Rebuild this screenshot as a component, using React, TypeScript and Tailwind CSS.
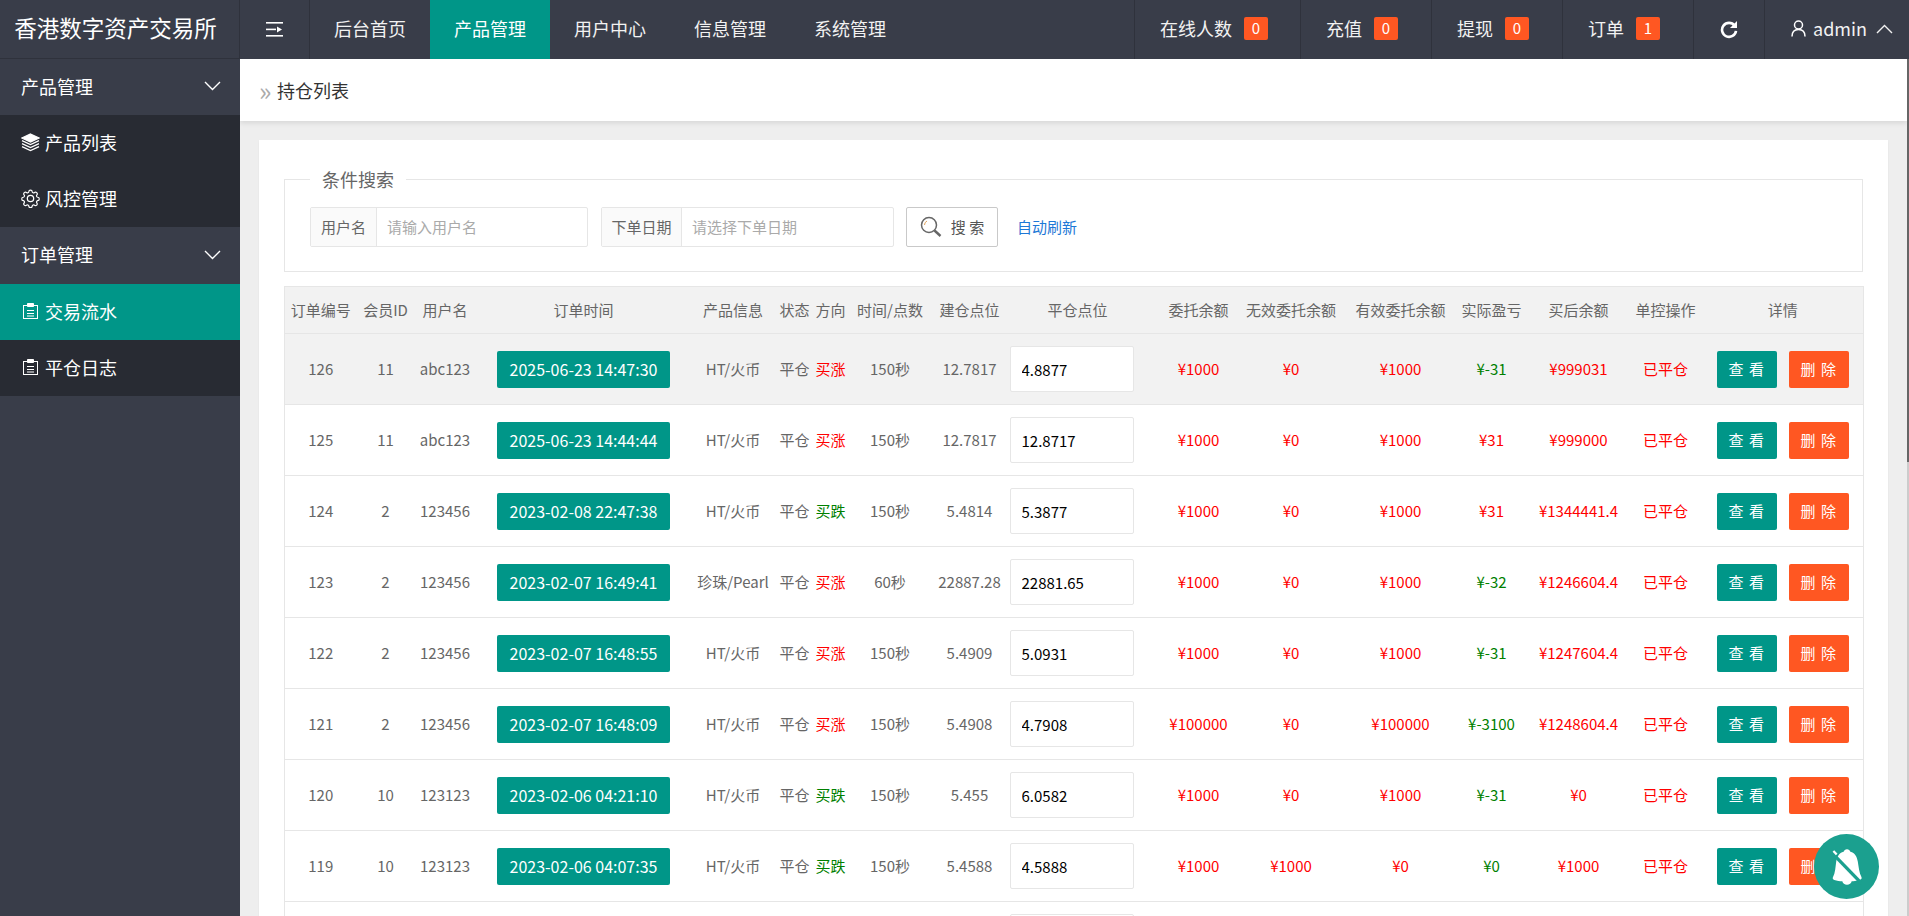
import React from "react";

const font = { fontFamily: '"Noto Sans CJK SC", sans-serif' };

type Row = {
  id: string; uid: string; name: string; time: string; prod: string; dir: "买涨" | "买跌"; dur: string;
  open: string; close: string; a: string; b: string; c: string; pl: string; win: boolean; after: string;
};

const rows: Row[] = [
  { id: "126", uid: "11", name: "abc123", time: "2025-06-23 14:47:30", prod: "HT/火币", dir: "买涨", dur: "150秒", open: "12.7817", close: "4.8877", a: "¥1000", b: "¥0", c: "¥1000", pl: "¥-31", win: false, after: "¥999031" },
  { id: "125", uid: "11", name: "abc123", time: "2025-06-23 14:44:44", prod: "HT/火币", dir: "买涨", dur: "150秒", open: "12.7817", close: "12.8717", a: "¥1000", b: "¥0", c: "¥1000", pl: "¥31", win: true, after: "¥999000" },
  { id: "124", uid: "2", name: "123456", time: "2023-02-08 22:47:38", prod: "HT/火币", dir: "买跌", dur: "150秒", open: "5.4814", close: "5.3877", a: "¥1000", b: "¥0", c: "¥1000", pl: "¥31", win: true, after: "¥1344441.4" },
  { id: "123", uid: "2", name: "123456", time: "2023-02-07 16:49:41", prod: "珍珠/Pearl", dir: "买涨", dur: "60秒", open: "22887.28", close: "22881.65", a: "¥1000", b: "¥0", c: "¥1000", pl: "¥-32", win: false, after: "¥1246604.4" },
  { id: "122", uid: "2", name: "123456", time: "2023-02-07 16:48:55", prod: "HT/火币", dir: "买涨", dur: "150秒", open: "5.4909", close: "5.0931", a: "¥1000", b: "¥0", c: "¥1000", pl: "¥-31", win: false, after: "¥1247604.4" },
  { id: "121", uid: "2", name: "123456", time: "2023-02-07 16:48:09", prod: "HT/火币", dir: "买涨", dur: "150秒", open: "5.4908", close: "4.7908", a: "¥100000", b: "¥0", c: "¥100000", pl: "¥-3100", win: false, after: "¥1248604.4" },
  { id: "120", uid: "10", name: "123123", time: "2023-02-06 04:21:10", prod: "HT/火币", dir: "买跌", dur: "150秒", open: "5.455", close: "6.0582", a: "¥1000", b: "¥0", c: "¥1000", pl: "¥-31", win: false, after: "¥0" },
  { id: "119", uid: "10", name: "123123", time: "2023-02-06 04:07:35", prod: "HT/火币", dir: "买跌", dur: "150秒", open: "5.4588", close: "4.5888", a: "¥1000", b: "¥1000", c: "¥0", pl: "¥0", win: false, after: "¥1000" },
];

const Chevron = ({ up = false }: { up?: boolean }) => (
  <svg width="17" height="10" viewBox="0 0 17 10" fill="none" stroke="currentColor" strokeWidth="1.4">
    <path d={up ? "M1 9L8.5 1.5L16 9" : "M1 1L8.5 8.5L16 1"} />
  </svg>
);

const Layers = () => (
  <svg width="19" height="19" viewBox="0 0 19 19" fill="none" stroke="white" strokeWidth="1.3">
    <path d="M9.5 1L18 5L9.5 9L1 5Z" fill="white" />
    <path d="M1 7.6L9.5 11.6L18 7.6" />
    <path d="M1 10.6L9.5 14.6L18 10.6" />
    <path d="M1 13.6L9.5 17.6L18 13.6" />
  </svg>
);

const Gear = () => (
  <svg width="19" height="19" viewBox="0 0 24 24" fill="none" stroke="white" strokeWidth="1.6" strokeLinejoin="round">
    <path d="M9.67 4.14a2 2 0 0 1 4.66 0 2 2 0 0 0 2.9 1.2 2 2 0 0 1 3.3 3.3 2 2 0 0 0 1.2 2.9 2 2 0 0 1 0 4.66 2 2 0 0 0-1.2 2.9 2 2 0 0 1-3.3 3.3 2 2 0 0 0-2.9 1.2 2 2 0 0 1-4.66 0 2 2 0 0 0-2.9-1.2 2 2 0 0 1-3.3-3.3 2 2 0 0 0-1.2-2.9 2 2 0 0 1 0-4.66 2 2 0 0 0 1.2-2.9 2 2 0 0 1 3.3-3.3 2 2 0 0 0 2.9-1.2Z" transform="translate(12 12) scale(.92) translate(-12 -13.3)" />
    <circle cx="12" cy="12" r="4" />
  </svg>
);

const Clip = () => (
  <svg width="15" height="16" viewBox="0 0 15 16" fill="none" stroke="white" strokeWidth="1">
    <rect x="0.5" y="2.5" width="14" height="13" />
    <path d="M4.5 0.5H10.5V3.5H4.5Z" fill="white" />
    <path d="M4 7.5H11M4 10.5H11M4 13H11" />
  </svg>
);

const SideHead = ({ label, cls }: { label: string; cls: string }) => (
  <div className={`flex items-center justify-between pb-[2px] pl-[21px] pr-[19px] text-[18px] text-white ${cls}`}>
    <span>{label}</span>
    <Chevron />
  </div>
);

const SideItem = ({ label, icon, active = false }: { label: string; icon: React.ReactNode; active?: boolean }) => (
  <div className={`flex h-[56px] items-center pb-[2px] pl-[21px] text-[18px] text-white ${active ? "bg-[#009688]" : "bg-[#282b33]"}`}>
    <span className="flex w-[24px] items-center">{icon}</span>
    <span>{label}</span>
  </div>
);

const NavLink = ({ label, active = false }: { label: string; active?: boolean }) => (
  <div className={`flex h-[59px] items-center px-6 pb-[2px] text-[18px] ${active ? "bg-[#009688] text-white" : "text-[#f2f2f2]"}`}>{label}</div>
);

const Stat = ({ label, n, cls }: { label: string; n: string; cls: string }) => (
  <div className={`flex h-[59px] items-center border-l border-[#2f323c] pb-[2px] text-[18px] text-[#f2f2f2] ${cls}`}>
    <span>{label}</span>
    <span className="ml-3 flex h-[23px] w-[24px] items-center justify-center rounded-[2px] bg-[#ff5722] text-[15px] text-white">{n}</span>
  </div>
);

const InputGroup = ({ label, ph, width, labelW }: { label: string; ph: string; width: string; labelW: string }) => (
  <div className={`flex h-[40px] rounded-[2px] border border-[#e6e6e6] text-[15px] ${width}`}>
    <div className={`flex items-center justify-center border-r border-[#e6e6e6] bg-[#fafafa] text-[#666] ${labelW}`}>{label}</div>
    <div className="flex items-center pl-[10px] text-[#aaa]">{ph}</div>
  </div>
);

const headers = ["订单编号", "会员ID", "用户名", "订单时间", "产品信息", "状态", "方向", "时间/点数", "建仓点位", "平仓点位", "委托余额", "无效委托余额", "有效委托余额", "实际盈亏", "买后余额", "单控操作", "详情"];

const Cell = ({ children, cls = "" }: { children?: React.ReactNode; cls?: string }) => (
  <td className={`whitespace-nowrap border-b border-[#e6e6e6] p-0 text-center ${cls}`}>{children}</td>
);

export default function App() {
  return (
    <div className="flex h-screen flex-col overflow-hidden bg-[#eeeeee]" style={font}>
      <header className="flex h-[59px] shrink-0 bg-[#393d49]">
        <div className="flex w-[240px] items-center justify-center border-r border-b border-[#2f323c] pb-[2px] pr-[8px] text-[22.5px] text-white">香港数字资产交易所</div>
        <div className="flex w-[70px] items-center justify-center border-r border-[#2f323c]">
          <svg width="17" height="15" viewBox="0 0 17 15" fill="white">
            <rect x="0" y="0" width="17" height="1.6" />
            <rect x="0" y="6.6" width="10" height="1.6" />
            <path d="M11 4.4L16 7.4L11 10.4Z" />
            <rect x="0" y="13" width="17" height="1.6" />
          </svg>
        </div>
        <NavLink label="后台首页" />
        <NavLink label="产品管理" active />
        <NavLink label="用户中心" />
        <NavLink label="信息管理" />
        <NavLink label="系统管理" />
        <div className="ml-auto flex">
          <Stat label="在线人数" n="0" cls="pl-[25px] pr-[32px]" />
          <Stat label="充值" n="0" cls="pl-[25px] pr-[33px]" />
          <Stat label="提现" n="0" cls="pl-[25px] pr-[33px]" />
          <Stat label="订单" n="1" cls="pl-[25px] pr-[33px]" />
          <div className="flex w-[71px] items-center justify-center border-l border-[#2f323c]">
            <svg width="18" height="18" viewBox="0 0 18 18" fill="none" stroke="white" strokeWidth="2.6">
              <path d="M14.6 4.6A7 7 0 1 0 16 9.8" />
              <path d="M17 0V7H10Z" fill="white" stroke="none" />
            </svg>
          </div>
          <div className="flex w-[145px] items-center border-l border-[#2f323c] pb-[2px] pl-[26px] text-[18px] text-[#f2f2f2]">
            <svg width="15" height="17" viewBox="0 0 15 17" fill="none" stroke="white" strokeWidth="1.5" className="mr-[7px]">
              <circle cx="7.5" cy="5" r="4" />
              <path d="M1 16.5C1 12 3.5 9.5 7.5 9.5S14 12 14 16.5" />
            </svg>
            <span>admin</span>
            <span className="ml-[9px] flex"><Chevron up /></span>
          </div>
        </div>
      </header>

      <div className="flex min-h-0 flex-1">
        <aside className="w-[240px] shrink-0 bg-[#393d49]">
          <SideHead label="产品管理" cls="h-[56px]" />
          <SideItem label="产品列表" icon={<Layers />} />
          <SideItem label="风控管理" icon={<Gear />} />
          <SideHead label="订单管理" cls="h-[57px]" />
          <SideItem label="交易流水" icon={<span className="ml-[2px] flex"><Clip /></span>} active />
          <SideItem label="平仓日志" icon={<span className="ml-[2px] flex"><Clip /></span>} />
        </aside>

        <main className="relative min-w-0 flex-1 overflow-hidden pr-[2px]">
          <div className="flex h-[62px] items-center bg-white pl-[19px] text-[18px] text-[#333] shadow-[0_2px_5px_rgba(0,0,0,0.1)]">
            <span className="mr-[6px] flex h-[24px] w-[12px] items-center text-[26px] leading-none text-[#aaa]">»</span>持仓列表
          </div>
          <div className="mx-[19px] mt-[19px] bg-white px-[25px] pt-[27px] shadow-[0_1px_2px_rgba(0,0,0,0.05)]">
            <fieldset className="border border-[#e6e6e6] px-[25px] pb-[24px] pt-[16px]">
              <legend className="px-[12px] text-[18px] leading-[24px] text-[#666]">条件搜索</legend>
              <div className="flex items-center">
                <InputGroup label="用户名" ph="请输入用户名" width="w-[278px]" labelW="w-[66px]" />
                <div className="w-[13px]" />
                <InputGroup label="下单日期" ph="请选择下单日期" width="w-[293px]" labelW="w-[80px]" />
                <button className="ml-[12px] flex h-[40px] w-[92px] items-center justify-center rounded-[2px] border border-[#c9c9c9] bg-white text-[15px] text-[#555]">
                  <svg width="22" height="22" viewBox="0 0 22 22" fill="none" className="mr-[9px]">
                    <circle cx="9" cy="9" r="7.5" stroke="#666" strokeWidth="1.5" />
                    <path d="M14.5 14.5L20.5 20" stroke="#666" strokeWidth="2.4" />
                    <path d="M4.5 9A4.5 4.5 0 0 1 7 5" stroke="#e2a35c" strokeWidth="1" />
                  </svg>
                  搜 索
                </button>
                <span className="ml-[19px] text-[15px] text-[#1e78d6]">自动刷新</span>
              </div>
            </fieldset>

            <table className="mt-[14px] w-full table-fixed border-collapse border border-[#e6e6e6] text-[15px] text-[#666]">
              <colgroup>
                {[72, 58, 61, 216, 83, 40, 32, 87, 72, 156, 74, 111, 108, 74, 100, 74, 161].map((w, i) => (
                  <col key={i} style={{ width: w }} />
                ))}
              </colgroup>
              <thead>
                <tr className="bg-[#f2f2f2]">
                  {headers.map((h, i) => (
                    <th key={h} className={`h-[47px] whitespace-nowrap border-b border-[#e6e6e6] p-0 text-center font-normal ${i === 9 ? "pr-[12px]" : ""}`}>{h}</th>
                  ))}
                </tr>
              </thead>
              <tbody>
                {rows.map((r, i) => (
                  <tr key={r.id} className={`h-[71px] ${i === 0 ? "bg-[#f2f2f2]" : "bg-white"}`}>
                    <Cell>{r.id}</Cell>
                    <Cell>{r.uid}</Cell>
                    <Cell>{r.name}</Cell>
                    <Cell>
                      <button className="h-[37px] w-[173px] rounded-[2px] bg-[#009688] text-[16px] text-white">{r.time}</button>
                    </Cell>
                    <Cell>{r.prod}</Cell>
                    <Cell>平仓</Cell>
                    <Cell cls={r.dir === "买涨" ? "text-[#ff0000]" : "text-[#008000]"}>{r.dir}</Cell>
                    <Cell>{r.dur}</Cell>
                    <Cell>{r.open}</Cell>
                    <Cell cls="text-left pl-[4px]">
                      <input readOnly defaultValue={r.close} className="h-[46px] w-[124px] rounded-[2px] border border-[#e6e6e6] bg-white pl-[11px] text-black outline-none" />
                    </Cell>
                    <Cell cls="text-[#ff0000]">{r.a}</Cell>
                    <Cell cls="text-[#ff0000]">{r.b}</Cell>
                    <Cell cls="text-[#ff0000]">{r.c}</Cell>
                    <Cell cls={r.win ? "text-[#ff0000]" : "text-[#008000]"}>{r.pl}</Cell>
                    <Cell cls="text-[#ff0000]">{r.after}</Cell>
                    <Cell cls="text-[#ff0000]">已平仓</Cell>
                    <Cell>
                      <div className="flex justify-center gap-3">
                        <button className="h-[37px] w-[60px] rounded-[2px] bg-[#009688] text-[15px] tracking-[1px] text-white">查 看</button>
                        <button className="h-[37px] w-[60px] rounded-[2px] bg-[#ff5722] text-[15px] tracking-[1px] text-white">删 除</button>
                      </div>
                    </Cell>
                  </tr>
                ))}
                <tr className="h-[71px] bg-white">
                  <td colSpan={9} className="p-0" />
                  <td className="p-0 pl-[4px] text-left"><input readOnly className="h-[46px] w-[124px] rounded-[2px] border border-[#e6e6e6] bg-white" /></td>
                  <td colSpan={7} className="p-0" />
                </tr>
              </tbody>
            </table>
          </div>

          <div className="absolute right-0 top-0 h-full w-[2px] bg-[#cccccc]">
            <div className="h-[403px] bg-[#666666]" />
          </div>
        </main>
      </div>

      <div className="fixed left-[1814px] top-[834px] flex h-[65px] w-[65px] items-center justify-center rounded-full bg-[#1ba08f]">
        <svg width="30" height="38" viewBox="0 0 32 40" fill="white">
          <path d="M16 1C17.8 1 19 2 19.6 3.6C24.5 5 26.5 8.5 27.5 14C28.4 19.5 29 26 31.5 31C32 32.5 31 33.5 29.5 33.8C26 34.8 22.5 35 21 35.3C20.5 37.5 18.5 39 16 39C13.5 39 11.5 37.5 11 35.3C8.5 35 5 34.8 2.5 33.8C1 33.3 0.3 32.2 1 31C3.5 26 3.7 19.5 4.5 14C5.5 8.5 7.5 5 12.4 3.6C13 2 14.2 1 16 1Z" />
          <path d="M0 5L32 38" stroke="#1ba08f" strokeWidth="3.5" />
          <path d="M1.5 3L5 6.6" stroke="white" strokeWidth="2.4" />
        </svg>
      </div>
    </div>
  );
}
